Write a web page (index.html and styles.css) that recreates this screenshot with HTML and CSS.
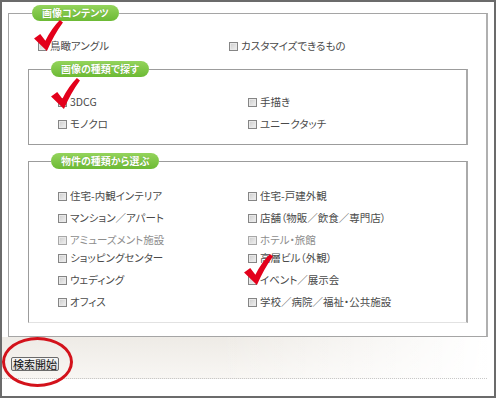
FILE: index.html
```html
<!DOCTYPE html>
<html lang="ja">
<head>
    <meta charset="UTF-8">
    <meta name="viewport" content="width=device-width, initial-scale=1.0">
    <title>画像検索</title>
    <link rel="stylesheet" href="styles.css">
</head>
<body>
    <div class="frame">
        <fieldset class="box outer">
            <legend class="tag">画像コンテンツ</legend>
            <div class="row first">
                <label class="opt"><input type="checkbox">鳥瞰アングル</label>
                <label class="opt"><input type="checkbox">カスタマイズできるもの</label>
            </div>

            <fieldset class="box inner">
                <legend class="tag">画像の種類で探す</legend>
                <div class="row first">
                    <label class="opt"><input type="checkbox">3DCG</label>
                    <label class="opt"><input type="checkbox">手描き</label>
                </div>
                <div class="row">
                    <label class="opt"><input type="checkbox">モノクロ</label>
                    <label class="opt"><input type="checkbox">ユニークタッチ</label>
                </div>
            </fieldset>

            <fieldset class="box inner last">
                <legend class="tag">物件の種類から選ぶ</legend>
                <div class="row first low">
                    <label class="opt"><input type="checkbox">住宅-内観インテリア</label>
                    <label class="opt"><input type="checkbox">住宅-戸建外観</label>
                </div>
                <div class="row">
                    <label class="opt"><input type="checkbox">マンション／アパート</label>
                    <label class="opt"><input type="checkbox">店舗（物販／飲食／専門店）</label>
                </div>
                <div class="row">
                    <label class="opt off"><input type="checkbox" disabled>アミューズメント施設</label>
                    <label class="opt off"><input type="checkbox" disabled>ホテル・旅館</label>
                </div>
                <div class="row tight">
                    <label class="opt"><input type="checkbox">ショッピングセンター</label>
                    <label class="opt"><input type="checkbox">高層ビル（外観）</label>
                </div>
                <div class="row">
                    <label class="opt"><input type="checkbox">ウェディング</label>
                    <label class="opt"><input type="checkbox">イベント／展示会</label>
                </div>
                <div class="row">
                    <label class="opt"><input type="checkbox">オフィス</label>
                    <label class="opt"><input type="checkbox">学校／病院／福祉・公共施設</label>
                </div>
            </fieldset>
        </fieldset>

        <div class="search">
            <button type="button" class="go">検索開始</button>
        </div>

        <!-- red marks drawn over the form -->
        <svg class="tick tick-1" viewBox="0 0 28 30"><path d="M0,18 L6,13.5 L11,20 Q17,8 25,0 L28,2.5 Q19.5,14 12.5,30 Z"/></svg>
        <svg class="tick tick-2" viewBox="0 0 28 30"><path d="M0,18 L6,13.5 L11,20 Q17,8 25,0 L28,2.5 Q19.5,14 12.5,30 Z"/></svg>
        <svg class="tick tick-3" viewBox="0 0 28 30"><path d="M0,18 L6,13.5 L11,20 Q17,8 25,0 L28,2.5 Q19.5,14 12.5,30 Z"/></svg>
        <div class="ring"></div>
    </div>
</body>
</html>
```

FILE: styles.css
```css
body {
    margin: 0;
    font-family: "Noto Sans CJK JP", "Noto Sans", sans-serif;
    font-feature-settings: "palt";
    font-size: 10.5px;
    color: #4a4a4a;
    background-color: #fff;
}

.frame {
    position: relative;
    width: 496px;
    height: 398px;
    box-sizing: border-box;
    border: 2px solid #6b6b6b;
    background-color: #fff;
}

.box {
    margin: 0;
    padding: 0;
    min-inline-size: 0;
    border: 1px solid #a5a5a5;
    border-right: 2px solid #b0b0b0;
}

.outer {
    margin: 3px 6px 0 6px;
    padding-bottom: 13px;
}

.inner {
    margin: 7px 18px 0 19px;
    padding-bottom: 12px;
    border-color: #9c9c9c;
    border-right-color: #aaa;
}

.inner.last {
    margin-top: 8px;
    border-bottom-color: #e2e2e2;
}

.tag {
    height: 16px;
    margin-left: 22px;
    padding: 0 10px;
    border-radius: 8px;
    background: linear-gradient(#94d45c, #6cba34);
    color: #fff;
    font-weight: bold;
    font-size: 10px;
    line-height: 16px;
    text-shadow: 0 0 1px rgba(60, 110, 20, 0.5);
}

.outer > .tag {
    margin-left: 23px;
}

.row {
    display: flex;
    height: 16px;
    margin-top: 6px;
    padding-left: 29px;
}

.row.first {
    margin-top: 17px;
}

.row.first.low {
    margin-top: 19px;
}

.row.tight {
    margin-top: 2px;
}

.opt {
    display: flex;
    align-items: center;
    gap: 3px;
    width: 190px;
    line-height: 16px;
    white-space: nowrap;
}

.outer > .row .opt {
    width: 191px;
}

.opt input {
    appearance: none;
    -webkit-appearance: none;
    width: 9px;
    height: 9px;
    margin: 0;
    border: 1px solid #858585;
    background: linear-gradient(135deg, #cbcbcb, #f2f2f2);
    box-shadow: inset 0 0 0 1px #e8e8e8;
}

.opt.off {
    color: #8d8d8d;
}

.opt.off input {
    border-color: #a8a8a8;
}

.search {
    height: 42px;
    margin: 0 7px 0 0;
    padding: 20px 0 0 9px;
    box-sizing: border-box;
    border-bottom: 1px dotted #c8c8c8;
    background:
        linear-gradient(to right, rgba(255, 255, 255, 0) 45%, #fff 100%),
        linear-gradient(#eeebe6, #f8f6f3);
}

.go {
    display: block;
    width: 48px;
    height: 14px;
    padding: 0;
    border: 1px solid #6a6a6a;
    border-radius: 2px;
    background: linear-gradient(#f7f7f7, #d9d9d9);
    font-family: "Noto Sans CJK JP", sans-serif;
    font-size: 11px;
    line-height: 12px;
    color: #111;
}

.tick {
    position: absolute;
    width: 29px;
    height: 31px;
    fill: #e3001b;
}

.tick-1 {
    left: 32px;
    top: 18px;
}

.tick-2 {
    left: 49px;
    top: 76px;
}

.tick-3 {
    left: 242px;
    top: 252px;
}

.ring {
    position: absolute;
    left: 0;
    top: 335px;
    width: 71px;
    height: 50px;
    box-sizing: border-box;
    border: 3px solid #d3121b;
    border-radius: 50%;
}
```
